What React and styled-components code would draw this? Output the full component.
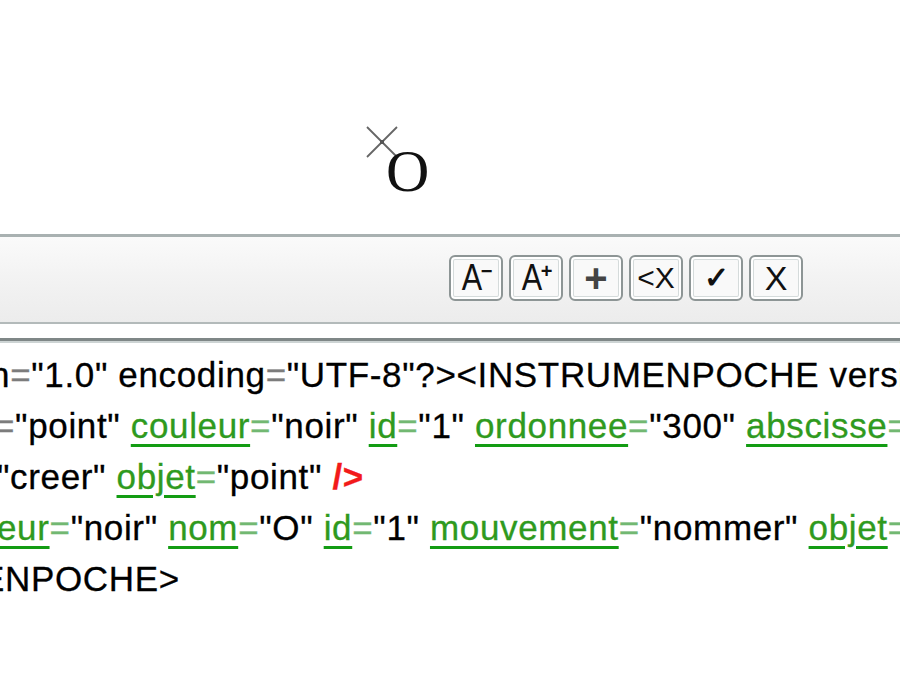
import React from 'react';
import styled, { createGlobalStyle } from 'styled-components';

const GlobalStyle = createGlobalStyle`
  html, body {
    margin: 0;
    padding: 0;
    background: #fff;
    overflow: hidden;
  }
  body {
    font-family: "Liberation Sans", Arial, sans-serif;
  }
`;

const Page = styled.div`
  width: 900px;
  height: 700px;
  display: flex;
  flex-direction: column;
  overflow: hidden;
`;

const Canvas = styled.div`
  position: relative;
  height: 234px;
  flex-shrink: 0;
`;

const Cross = styled.svg`
  position: absolute;
  width: 34px;
  height: 34px;
`;

const PointLabel = styled.span`
  position: absolute;
  font-family: "Liberation Serif", "Times New Roman", serif;
  font-size: 60px;
  line-height: 1;
  color: #111;
`;

const Toolbar = styled.div`
  box-sizing: border-box;
  height: 90px;
  flex-shrink: 0;
  display: flex;
  justify-content: flex-end;
  align-items: center;
  gap: 6px;
  padding: 0 97px 4px 0;
  border-top: 3px solid #a9b1b1;
  border-bottom: 2px solid #b3baba;
  background: linear-gradient(#fafafa, #f1f1f1 60%, #ececec);
`;

const ToolButton = styled.button`
  box-sizing: border-box;
  width: 54px;
  height: 46px;
  padding: 0;
  display: flex;
  align-items: center;
  justify-content: center;
  border: 2px solid #8d9595;
  border-radius: 6px;
  background: #f9f9f9;
  box-shadow: inset 0 0 0 2px #fff, inset 0 0 0 3px #d5dbdb;
  font-family: "Liberation Sans", Arial, sans-serif;
  font-size: ${p => p.$size || 30}px;
  font-weight: ${p => (p.$bold ? 700 : 400)};
  color: ${p => p.$color || '#111'};
  line-height: 1;
`;

const Letter = styled.span`
  display: inline-block;
  font-size: 36px;
  transform: scaleX(0.85);
  margin-right: -3px;
`;

const Sup = styled.span`
  display: inline-block;
  font-size: 20px;
  font-weight: 700;
  align-self: flex-start;
  margin-top: 4px;
`;

const CodePanel = styled.div`
  margin-top: 14px;
  flex: 1;
  border-top: 3px solid #7f8787;
  box-shadow: inset 0 2px 0 #cdd4d4;
  padding-top: 8px;
  overflow: hidden;
`;

const CodeLine = styled.div`
  height: 51px;
  line-height: 51px;
  font-size: 35px;
  letter-spacing: 0.65px;
  white-space: pre;
  color: #000;
  text-indent: ${p => p.$shift || 0}px;
  -webkit-text-stroke: 0.3px currentColor;
`;

const Attr = styled.span`
  color: #2f9a1e;
  text-decoration: underline;
  text-decoration-color: #139c13;
  text-decoration-thickness: 3px;
  text-underline-offset: 6px;
`;

const Eq = styled.span`
  color: ${p => (p.$plain ? '#7c7c7c' : '#72b872')};
`;

const Close = styled.span`
  color: #f21a1a;
  font-weight: 700;
`;

const point = { x: 382, y: 142 };

const buttons = [
  { key: 'dec', label: <><Letter>A</Letter><Sup>−</Sup></> },
  { key: 'inc', label: <><Letter>A</Letter><Sup>+</Sup></> },
  { key: 'add', label: '+', size: 40, bold: true, color: '#444' },
  { key: 'del', label: '<X', size: 30 },
  { key: 'ok', label: '✓', size: 30, bold: true },
  { key: 'close', label: 'X', size: 34 },
];

const Pair = ({ name, value, last }) => (
  <>
    <Attr>{name}</Attr>
    <Eq>=</Eq>
    {value !== undefined && `"${value}"`}
    {!last && ' '}
  </>
);

export default function App() {
  return (
    <Page>
      <GlobalStyle />
      <Canvas>
        <Cross
          viewBox="0 0 34 34"
          style={{ left: point.x - 17, top: point.y - 17 }}
        >
          <path d="M2 2 L32 32 M32 2 L2 32" stroke="#666" strokeWidth="1.8" fill="none" />
          <rect x="15" y="15" width="4" height="4" fill="#555" />
        </Cross>
        <PointLabel style={{ left: point.x + 4, top: point.y - 1 }}>O</PointLabel>
      </Canvas>

      <Toolbar>
        {buttons.map(b => (
          <ToolButton key={b.key} $size={b.size} $bold={b.bold} $color={b.color}>
            {b.label}
          </ToolButton>
        ))}
      </Toolbar>

      <CodePanel>
        <CodeLine $shift={-10}>
          n<Eq $plain>=</Eq>"1.0" encoding<Eq $plain>=</Eq>"UTF-8"?&gt;&lt;INSTRUMENPOCHE version
        </CodeLine>
        <CodeLine $shift={-6}>
          <Eq $plain>=</Eq>"point" <Pair name="couleur" value="noir" />
          <Pair name="id" value="1" />
          <Pair name="ordonnee" value="300" />
          <Pair name="abscisse" value="300" last />
        </CodeLine>
        <CodeLine $shift={-3}>
          "creer" <Pair name="objet" value="point" />
          <Close>/&gt;</Close>
        </CodeLine>
        <CodeLine $shift={-3}>
          <Pair name="eur" value="noir" />
          <Pair name="nom" value="O" />
          <Pair name="id" value="1" />
          <Pair name="mouvement" value="nommer" />
          <Pair name="objet" value="point" last />
        </CodeLine>
        <CodeLine $shift={-19}>ENPOCHE&gt;</CodeLine>
      </CodePanel>
    </Page>
  );
}
